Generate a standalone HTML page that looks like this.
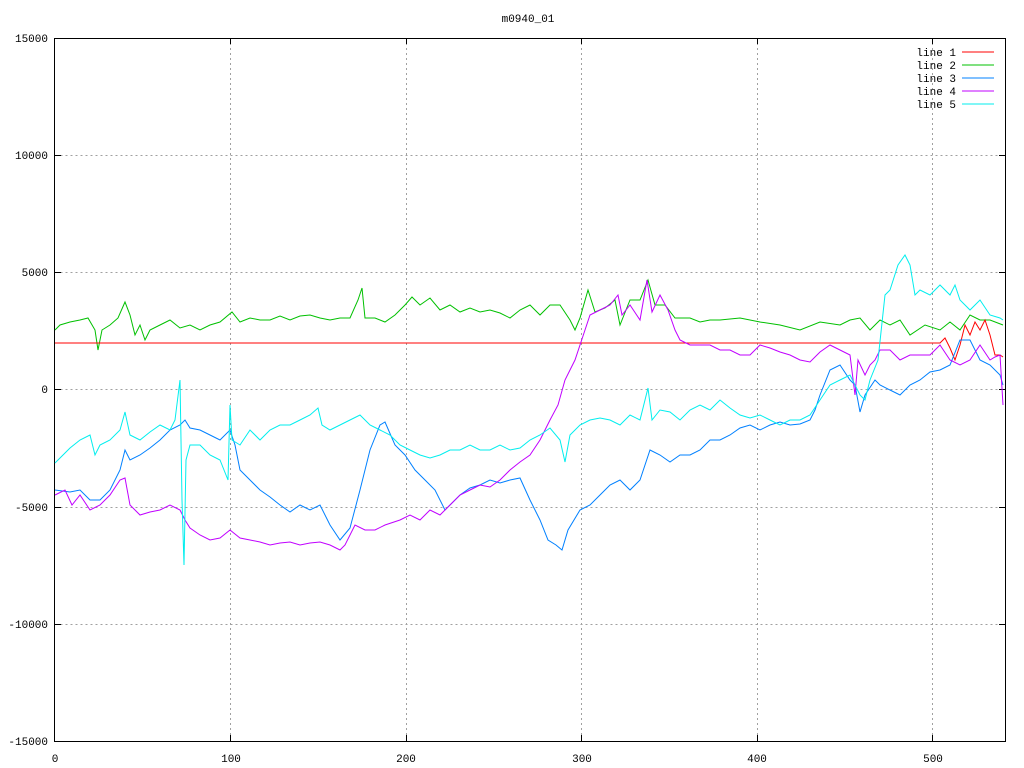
<!DOCTYPE html>
<html><head><style>body{margin:0;background:#fff}svg{display:block}text{font-family:"Liberation Mono","DejaVu Sans Mono",monospace;font-size:11px;fill:#000}</style></head><body>
<svg width="1024" height="768" xmlns="http://www.w3.org/2000/svg">
<g stroke="#a0a0a0" stroke-dasharray="2,3" stroke-width="1">
<path d="M55.5 155.5H1005M55.5 272.5H1005M55.5 389.5H1005M55.5 507.5H1005M55.5 624.5H1005"/>
<path d="M230.5 38V741M406.5 38V741M581.5 38V741M757.5 38V741M932.5 38V741"/>
</g>
<rect x="54.5" y="38.5" width="951" height="703" fill="none" stroke="#000"/>
<g stroke="#000"><path d="M55 155.5h6M55 272.5h6M55 389.5h6M55 507.5h6M55 624.5h6M999 155.5h6M999 272.5h6M999 389.5h6M999 507.5h6M999 624.5h6M230.5 741v-6M406.5 741v-6M581.5 741v-6M757.5 741v-6M932.5 741v-6M230.5 38v6M406.5 38v6M581.5 38v6M757.5 38v6M932.5 38v6"/></g>
<text x="528" y="22" text-anchor="middle">m0940_01</text>
<g text-anchor="end"><text x="48" y="42">15000</text><text x="48" y="159">10000</text><text x="48" y="276">5000</text><text x="48" y="393">0</text><text x="48" y="511">-5000</text><text x="48" y="628">-10000</text><text x="48" y="745">-15000</text></g>
<g text-anchor="middle"><text x="55" y="762">0</text><text x="231" y="762">100</text><text x="406" y="762">200</text><text x="582" y="762">300</text><text x="757" y="762">400</text><text x="933" y="762">500</text></g>
<g text-anchor="end"><text x="956" y="56">line 1</text><text x="956" y="69">line 2</text><text x="956" y="82">line 3</text><text x="956" y="95">line 4</text><text x="956" y="108">line 5</text></g>
<g fill="none" stroke-width="1">
<path stroke="#ff0000" d="M962 52h32"/><path stroke="#00c000" d="M962 65h32"/><path stroke="#0080ff" d="M962 78h32"/><path stroke="#c000ff" d="M962 91h32"/><path stroke="#00eeee" d="M962 104h32"/>
<path stroke="#00c000" d="M55 330L60 325L70 322L80 320L88 318L95 330L98 350L102 330L110 325L118 318L125 302L130 315L135 335L140 325L145 340L150 330L160 325L170 320L180 328L190 325L200 330L210 325L220 322L232 312L240 322L250 318L260 320L270 320L280 316L290 320L300 316L310 315L320 318L330 320L340 318L350 318L358 300L362 288L365 318L375 318L385 322L395 315L405 305L412 297L420 305L430 298L440 310L450 305L460 312L470 308L480 312L490 310L500 313L510 318L520 310L530 305L540 315L550 305L560 305L570 320L575 330L580 318L588 290L595 312L605 308L615 300L620 325L630 300L640 300L648 280L655 305L665 305L675 318L690 318L700 322L710 320L720 320L740 318L760 322L780 325L800 330L820 322L840 325L850 320L860 318L870 330L880 320L890 325L900 320L910 335L925 325L940 330L950 322L960 330L970 315L980 320L990 320L1003 325"/>
<path stroke="#ff0000" d="M55 343L935 343L940 343L945 338L950 348L955 360L960 345L965 325L970 335L975 322L980 330L985 320L990 335L995 355L1000 355L1003 357"/>
<path stroke="#0080ff" d="M55 490L70 492L80 490L90 500L100 500L110 490L120 470L125 450L130 460L140 455L150 448L160 440L170 430L180 425L185 420L190 428L200 430L210 435L220 440L230 430L235 445L240 470L250 480L260 490L270 497L280 505L290 512L300 505L310 510L320 505L330 525L340 540L350 528L360 490L370 450L380 425L385 422L395 445L405 455L415 470L425 480L435 490L445 510L450 505L460 495L470 488L480 485L490 480L500 483L510 480L520 478L530 500L540 520L548 540L556 545L562 550L568 530L580 510L590 505L600 495L610 485L620 480L630 490L640 480L650 450L660 455L670 462L680 455L690 455L700 450L710 440L720 440L730 435L740 428L750 425L760 430L770 425L780 422L790 425L800 424L810 420L815 410L820 395L830 370L840 365L850 380L855 385L860 412L865 395L875 380L880 385L890 390L900 395L910 385L920 380L930 372L940 370L950 365L960 340L970 340L980 360L990 365L1000 375L1003 385"/>
<path stroke="#c000ff" d="M55 495L65 490L72 505L80 495L90 510L100 505L110 495L120 480L125 478L130 505L140 515L150 512L160 510L170 505L180 510L185 520L190 528L200 535L210 540L220 538L230 530L240 538L250 540L260 542L270 545L280 543L290 542L300 545L310 543L320 542L330 545L340 550L345 545L355 525L365 530L375 530L385 525L400 520L410 515L420 520L430 510L440 515L450 505L460 495L470 490L480 485L490 487L500 480L510 470L520 462L530 455L540 440L550 420L558 405L565 380L570 370L575 360L580 345L585 330L590 315L600 310L610 305L618 295L622 315L630 305L640 320L647 280L652 312L660 295L668 310L675 330L680 340L690 345L700 345L710 345L720 350L730 350L740 355L750 355L760 345L770 348L780 352L790 355L800 360L810 362L820 352L830 345L840 350L850 355L855 395L858 360L865 375L870 365L875 360L880 350L890 350L900 360L910 355L920 355L930 355L940 345L950 360L960 365L970 360L980 345L990 360L995 357L1000 355L1003 405"/>
<path stroke="#00eeee" d="M55 463L60 458L70 448L80 440L90 435L95 455L100 445L110 440L120 430L125 412L130 435L140 440L150 432L160 425L170 430L175 420L180 380L182 500L184 565L186 460L190 445L200 445L210 455L220 460L228 480L230 405L232 440L240 445L250 430L260 440L270 430L280 425L290 425L300 420L310 415L318 408L322 425L330 430L340 425L350 420L360 415L370 425L380 430L390 435L400 445L410 450L420 455L430 458L440 455L450 450L460 450L470 445L480 450L490 450L500 445L510 450L520 448L530 440L540 435L550 428L560 440L565 462L570 435L580 425L590 420L600 418L610 420L620 425L630 415L640 420L648 388L652 420L660 410L670 412L680 420L690 410L700 405L710 410L720 400L730 408L740 415L750 418L760 415L770 420L780 425L790 420L800 420L810 415L820 400L830 385L840 380L850 375L860 395L865 400L870 380L878 360L885 295L890 290L898 265L905 255L910 265L915 295L920 290L930 295L935 290L940 285L950 295L955 285L960 300L970 310L980 300L990 315L1000 318L1003 320"/>
</g>
</svg>
</body></html>
